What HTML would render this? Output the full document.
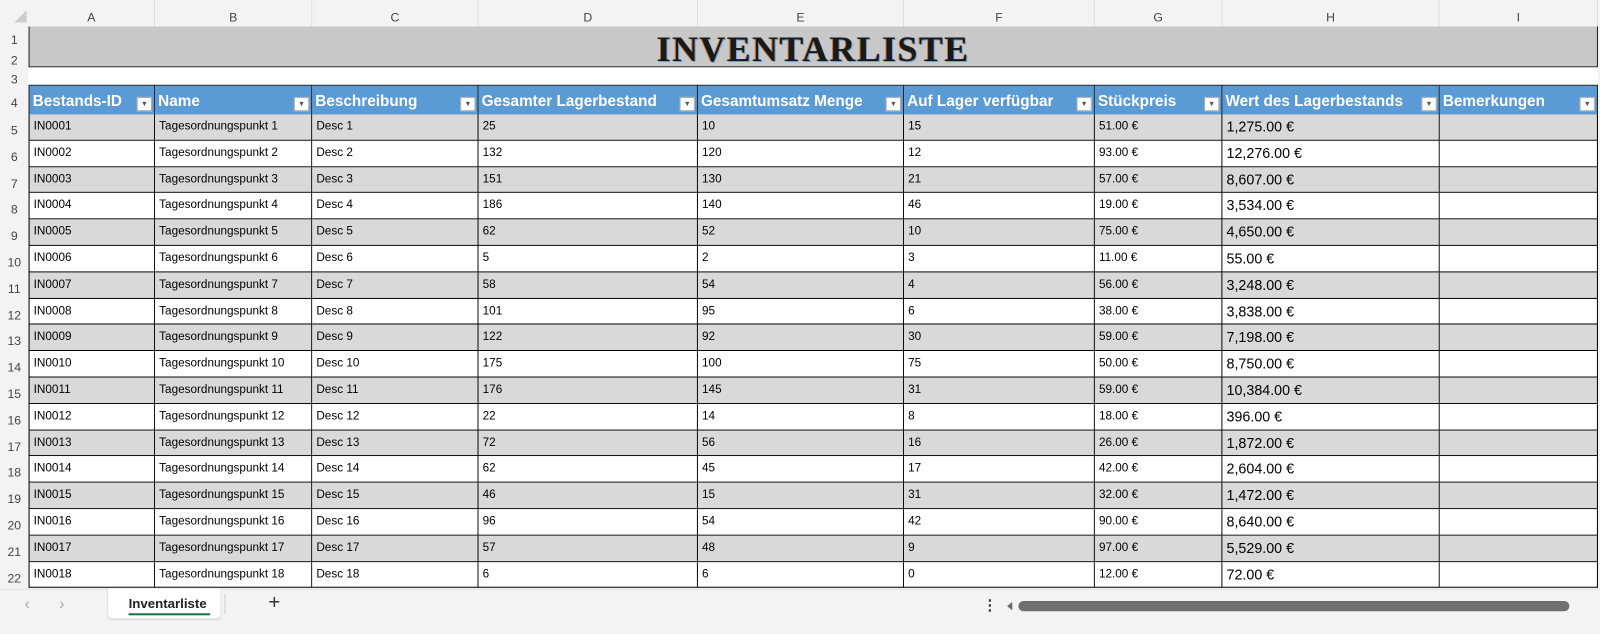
<!DOCTYPE html>
<html><head><meta charset="utf-8"><style>
*{margin:0;padding:0;box-sizing:border-box}
body{width:1600px;height:621px;overflow:hidden;background:#f3f3f3;font-family:"Liberation Sans",sans-serif;position:relative}
#w{position:absolute;left:0;top:0;width:1568px;height:609px;transform:scale(1.0204);transform-origin:0 0}
.ch{position:absolute;top:0;height:26px;font-size:12px;color:#444;text-align:center;line-height:34px;border-right:1px solid #ddd;background:#f3f3f3}
.rh{position:absolute;left:0;width:28px;font-size:12px;color:#444;text-align:center;background:#f3f3f3}
.c{position:absolute;overflow:hidden;white-space:nowrap;font-size:11.5px;padding-left:4px;color:#000;border-right:1px solid #000;border-bottom:1px solid #000}
.h{background:#5b9bd5;color:#fff;font-weight:bold;font-size:15px;border:1px solid #222;border-left:none}
.arr{position:absolute;right:2px;bottom:3px;width:15px;height:14px;background:#fff;border:1px solid #aaa;font-size:7px;color:#555;text-align:center;line-height:13px}
</style></head><body><div id="w">
<div style="position:absolute;left:14px;top:10px;width:0;height:0;border-left:12px solid transparent;border-bottom:12px solid #ccc"></div>
<div id="g"></div>
<div style="position:absolute;left:28px;top:26px;width:1538px;height:40px;background:#c8c8c8;border:1px solid #222;border-top:none;text-align:center;font-family:'Liberation Serif',serif;font-weight:bold;font-size:35px;letter-spacing:1.5px;line-height:46px;color:#1a1a1a;text-shadow:1px 1px 0 #6aa0d8,-1px 0 0 #c87a2a">INVENTARLISTE</div>
<div style="position:absolute;left:28px;top:66px;width:1538px;height:17px;background:#fff"></div>
<div style="position:absolute;left:0;top:577px;width:1568px;height:44px;background:#f3f3f3;border-top:1px solid #e0e0e0"></div>
<div style="position:absolute;left:24px;top:584px;font-size:16px;color:#aaa">&#8249;</div>
<div style="position:absolute;left:58px;top:584px;font-size:16px;color:#aaa">&#8250;</div>
<div style="position:absolute;left:106px;top:577px;width:110px;height:29px;background:#fff;border-radius:0 0 4px 4px;box-shadow:0 1px 2px #ccc"></div>
<div style="position:absolute;left:126px;top:584px;font-size:13px;font-weight:bold;color:#222">Inventarliste</div>
<div style="position:absolute;left:126px;top:601px;width:80px;height:2px;background:#1e7145"></div>
<div style="position:absolute;left:220px;top:582px;width:1px;height:20px;background:#ccc"></div>
<div style="position:absolute;left:263px;top:580px;font-size:20px;color:#333">+</div>
<div style="position:absolute;left:963px;top:585px;font-size:14px;font-weight:bold;color:#333">&#8942;</div>
<div style="position:absolute;left:987px;top:590px;width:0;height:0;border-top:4px solid transparent;border-bottom:4px solid transparent;border-right:5px solid #666"></div>
<div style="position:absolute;left:998px;top:589px;width:540px;height:10px;background:#707070;border-radius:5px"></div>
</div>
<script>
var X=[28,152,306,469,684,886,1073,1198,1411,1566];
var L="ABCDEFGHI",g="";
for(var i=0;i<9;i++)g+='<div class="ch" style="left:'+X[i]+'px;width:'+(X[i+1]-X[i])+'px">'+L[i]+'</div>';
var rt=[26,45,66,83,112];for(var r=5;r<=22;r++)rt.push(112+(r-4)*25.8);
for(var r=1;r<=22;r++){var t=rt[r-1],h=(rt[r]||577)-t;g+='<div class="rh" style="top:'+t+'px;height:'+h+'px;line-height:'+(h+8)+'px">'+r+'</div>';}
var H=["Bestands-ID","Name","Beschreibung","Gesamter Lagerbestand","Gesamtumsatz Menge","Auf Lager verfügbar","Stückpreis","Wert des Lagerbestands","Bemerkungen"];
for(var i=0;i<9;i++)g+='<div class="c h" style="left:'+X[i]+'px;top:83px;width:'+(X[i+1]-X[i])+'px;height:30px;line-height:31px;padding-left:3px'+(i==0?';border-left:1px solid #222':'')+'">'+H[i]+'<div class="arr">&#9660;</div></div>';
var D=[[25,10,15,51,"1,275.00"],[132,120,12,93,"12,276.00"],[151,130,21,57,"8,607.00"],[186,140,46,19,"3,534.00"],[62,52,10,75,"4,650.00"],[5,2,3,11,"55.00"],[58,54,4,56,"3,248.00"],[101,95,6,38,"3,838.00"],[122,92,30,59,"7,198.00"],[175,100,75,50,"8,750.00"],[176,145,31,59,"10,384.00"],[22,14,8,18,"396.00"],[72,56,16,26,"1,872.00"],[62,45,17,42,"2,604.00"],[46,15,31,32,"1,472.00"],[96,54,42,90,"8,640.00"],[57,48,9,97,"5,529.00"],[6,6,0,12,"72.00"]];
for(var k=0;k<18;k++){var n=k+1,d=D[k],t=rt[k+4],h=25.8,bg=k%2==0?'#d9d9d9':'#fff';
var v=["IN00"+(n<10?"0":"")+n,"Tagesordnungspunkt "+n,"Desc "+n,d[0],d[1],d[2],d[3]+".00 €",d[4]+" €",""];
for(var i=0;i<9;i++)g+='<div class="c" style="left:'+X[i]+'px;top:'+t+'px;width:'+(X[i+1]-X[i])+'px;height:'+h+'px;line-height:'+h+'px;background:'+bg+(i==0?';border-left:1px solid #000':'')+(i==7?';font-size:14px':'')+'">'+v[i]+'</div>';}
document.getElementById('g').innerHTML=g;
</script>
</body></html>
